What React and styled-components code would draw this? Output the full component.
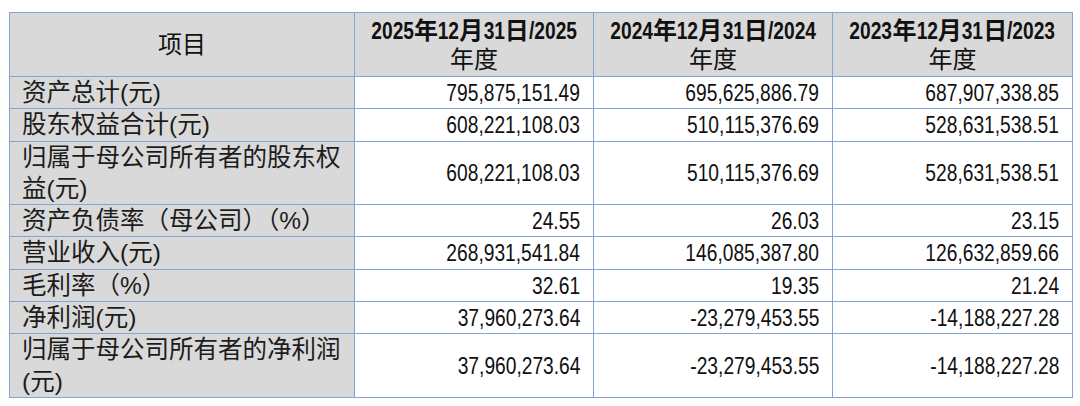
import React from 'react';
import styled, { createGlobalStyle } from 'styled-components';

const rows = [
  { label: '资产总计(元)', values: ['795,875,151.49', '695,625,886.79', '687,907,338.85'] },
  { label: '股东权益合计(元)', values: ['608,221,108.03', '510,115,376.69', '528,631,538.51'] },
  { label: '归属于母公司所有者的股东权益(元)', values: ['608,221,108.03', '510,115,376.69', '528,631,538.51'] },
  { label: '资产负债率（母公司）（%）', values: ['24.55', '26.03', '23.15'] },
  { label: '营业收入(元)', values: ['268,931,541.84', '146,085,387.80', '126,632,859.66'] },
  { label: '毛利率（%）', values: ['32.61', '19.35', '21.24'] },
  { label: '净利润(元)', values: ['37,960,273.64', '-23,279,453.55', '-14,188,227.28'] },
  { label: '归属于母公司所有者的净利润(元)', values: ['37,960,273.64', '-23,279,453.55', '-14,188,227.28'] },
];

const years = ['2025', '2024', '2023'];

// the source uses a narrow Arial; we squeeze Liberation Sans instead
const SQUEEZE = 0.8;

// advance widths of Liberation Sans glyphs, in em
const emWidth = (s) =>
  [...s].reduce((w, c) => w + (/[0-9]/.test(c) ? 0.556 : c === '-' ? 0.333 : 0.278), 0);

const GlobalStyle = createGlobalStyle`
  body {
    margin: 0;
    background: #ffffff;
  }
`;

const Page = styled.div`
  padding: 12px 0 0 9px;
`;

const Table = styled.table`
  border-collapse: collapse;
  table-layout: fixed;
  width: 1064px;
  color: #111111;
`;

const HeadCell = styled.th`
  background: #d9d9d9;
  border: 1px solid #86a2d6;
  height: 62px;
  padding: 1px 0 0;
  font-family: "Liberation Sans", "Noto Sans CJK SC", sans-serif;
  font-size: 24px;
  line-height: 29.5px;
  font-weight: 400;
  color: #111111;
  text-align: center;
  vertical-align: middle;
`;

const HeadLine = styled.div`
  font-weight: ${(p) => (p.$bold ? 700 : 400)};
  white-space: nowrap;
`;

const Narrow = styled.span`
  display: inline-block;
  transform: scaleX(${SQUEEZE});
  margin: 0 ${(p) => (-p.$w * (1 - SQUEEZE)) / 2}em;
`;

const LabelCell = styled.td`
  background: #d9d9d9;
  border: 1px solid #86a2d6;
  padding: 0 8px 0 12px;
  font-family: "Liberation Sans", "Noto Sans CJK SC", sans-serif;
  font-size: 24.5px;
  line-height: 31.3px;
  color: #1c1c1c;
  text-align: left;
  vertical-align: middle;
`;

const NumCell = styled.td`
  background: #ffffff;
  border: 1px solid #86a2d6;
  padding: 0 13px 0 0;
  font-family: "Liberation Sans", sans-serif;
  font-size: 24px;
  line-height: 31.3px;
  color: #111111;
  text-align: right;
  vertical-align: middle;
  white-space: nowrap;
`;

const NumText = styled.span`
  display: inline-block;
  transform: scaleX(${SQUEEZE});
  transform-origin: right center;
`;

function YearHead({ year }) {
  const parts = [year, '年', '12', '月', '31', '日', `/${year}`];
  return (
    <HeadCell>
      <HeadLine $bold>
        {parts.map((p, i) =>
          i % 2 === 0 ? (
            <Narrow key={i} $w={emWidth(p)}>{p}</Narrow>
          ) : (
            <span key={i}>{p}</span>
          )
        )}
      </HeadLine>
      <HeadLine>年度</HeadLine>
    </HeadCell>
  );
}

export default function App() {
  return (
    <Page>
      <GlobalStyle />
      <Table>
        <colgroup>
          <col style={{ width: 345 }} />
          <col style={{ width: 239 }} />
          <col style={{ width: 239 }} />
          <col style={{ width: 240 }} />
        </colgroup>
        <thead>
          <tr>
            <HeadCell>项目</HeadCell>
            {years.map((y) => (
              <YearHead key={y} year={y} />
            ))}
          </tr>
        </thead>
        <tbody>
          {rows.map((r) => (
            <tr key={r.label}>
              <LabelCell>{r.label}</LabelCell>
              {r.values.map((v, i) => (
                <NumCell key={i}>
                  <NumText>{v}</NumText>
                </NumCell>
              ))}
            </tr>
          ))}
        </tbody>
      </Table>
    </Page>
  );
}
